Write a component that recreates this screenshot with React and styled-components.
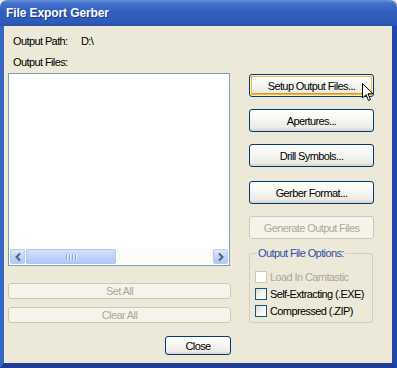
import React from "react";
import styled, { createGlobalStyle } from "styled-components";

const Global = createGlobalStyle`
  html, body {
    margin: 0;
    padding: 0;
    background: #ECE9D8;
  }
  * { box-sizing: border-box; }
`;

const Window = styled.div`
  position: relative;
  width: 397px;
  height: 368px;
  display: flex;
  flex-direction: column;
  font-family: "Liberation Sans", Arial, sans-serif;
  font-size: 11px;
  letter-spacing: -0.6px;
  color: #000;
`;

const TitleBar = styled.div`
  height: 26px;
  display: flex;
  align-items: center;
  padding-left: 6px;
  border-radius: 7px 7px 0 0;
  background: linear-gradient(180deg, #6A93DE 0%, #4572CB 12%, #325FBF 45%, #2F5BBA 80%, #2B53AD 100%);
  color: #fff;
  font-weight: bold;
  font-size: 12px;
  letter-spacing: -0.1px;
  text-shadow: 1px 1px 0 #1B3C8A;
`;

const Frame = styled.div`
  flex: 1;
  display: flex;
  flex-direction: column;
  background: #ECE9D8;
  border-left: 4px solid #3765C3;
  border-right: 5px solid #2347A5;
  border-bottom: 5px solid #1F3C97;
  padding: 8px 0 0 4px;
`;

const InfoRow = styled.div`
  display: flex;
  height: 14px;
  line-height: 14px;
  padding-left: 5px;
  margin-bottom: ${p => p.$gap || 0}px;
`;

const InfoLabel = styled.span`
  width: ${p => p.$width || "auto"};
`;

const Columns = styled.div`
  display: flex;
  align-items: flex-start;
`;

const LeftColumn = styled.div`
  width: 223px;
  display: flex;
  flex-direction: column;
`;

const RightColumn = styled.div`
  width: 125px;
  margin-left: 18px;
  padding-top: 1px;
  display: flex;
  flex-direction: column;
`;

const ListBox = styled.div`
  height: 193px;
  width: 222px;
  background: #fff;
  border: 1px solid #7F9DB9;
  display: flex;
  flex-direction: column;
  justify-content: flex-end;
  padding: 0 1px 1px 1px;
`;

const ScrollBar = styled.div`
  height: 15px;
  display: flex;
  background: #FBFBF8;
`;

const ScrollButton = styled.div`
  width: 15px;
  height: 15px;
  border-radius: 2px;
  border: 1px solid #B9CBF3;
  background: linear-gradient(180deg, #DCE6FC 0%, #C4D4F8 50%, #B4C7F3 100%);
  display: flex;
  align-items: center;
  justify-content: center;
`;

const Thumb = styled.div`
  width: 90px;
  margin-left: 1px;
  border-radius: 2px;
  border: 1px solid #AFC3EE;
  background: linear-gradient(180deg, #D6E2FC 0%, #C3D3F9 50%, #B5C8F4 100%);
  display: flex;
  align-items: center;
  justify-content: center;
  gap: 1px;
`;

const Grip = styled.span`
  width: 1px;
  height: 6px;
  background: #8CA6DC;
  border-right: 1px solid #EEF3FE;
  box-sizing: content-box;
`;

const Track = styled.div`
  flex: 1;
`;

const Button = styled.div`
  height: ${p => p.$height || 23}px;
  width: ${p => p.$width || "100%"};
  margin-top: ${p => p.$top || 0}px;
  align-self: ${p => p.$align || "stretch"};
  display: flex;
  align-items: center;
  justify-content: center;
  border-radius: 3px;
  border: 1px solid ${p => (p.$disabled ? "#CAC8BB" : "#003C74")};
  background: ${p =>
    p.$disabled
      ? "#F5F4EA"
      : "linear-gradient(180deg, #FFFFFF 0%, #F7F7F4 40%, #ECEBE6 85%, #D6D0C5 100%)"};
  color: ${p => (p.$disabled ? "#ACA899" : "#000")};
  box-shadow: ${p =>
    p.$hover ? "inset 0 0 0 1px #FFF0CF, inset 0 0 0 2px #F9B43A, inset 0 -2px 0 1px #E59700" : "none"};
`;

const GroupBox = styled.fieldset`
  margin: 7px 0 0 0;
  padding: 8px 5px 3px 5px;
  border: 1px solid #D0D0BF;
  border-radius: 3px;
  width: 124px;
`;

const Legend = styled.legend`
  padding: 0 1px;
  margin-left: 2px;
  color: #2C4DA8;
  line-height: 14px;
`;

const CheckRow = styled.div`
  height: 17px;
  display: flex;
  align-items: center;
  gap: 3px;
  color: ${p => (p.$disabled ? "#ACA899" : "#000")};
`;

const CheckBox = styled.span`
  width: 12px;
  height: 12px;
  border: 1px solid ${p => (p.$disabled ? "#CAC8BB" : "#1C5180")};
  background: ${p => (p.$disabled ? "#FFFFFF" : "linear-gradient(135deg, #DCDCD7 0%, #F4F4F0 50%, #FFFFFF 100%)")};
`;

const Cursor = styled.svg`
  position: absolute;
  left: 362px;
  top: 83px;
`;

function Arrow({ dir }) {
  const d = dir === "left" ? "M6 1.5 L2.5 5 L6 8.5" : "M2 1.5 L5.5 5 L2 8.5";
  return (
    <svg width="8" height="10" viewBox="0 0 8 10">
      <path d={d} fill="none" stroke="#4D6185" strokeWidth="2" />
    </svg>
  );
}

export default function App() {
  return (
    <>
      <Global />
      <Window>
        <TitleBar>File Export Gerber</TitleBar>
        <Frame>
          <InfoRow $gap={7}>
            <InfoLabel $width="68px">Output Path:</InfoLabel>
            <span>D:\</span>
          </InfoRow>
          <InfoRow $gap={4}>
            <InfoLabel>Output Files:</InfoLabel>
          </InfoRow>
          <Columns>
            <LeftColumn>
              <ListBox>
                <ScrollBar>
                  <ScrollButton><Arrow dir="left" /></ScrollButton>
                  <Thumb><Grip /><Grip /><Grip /><Grip /></Thumb>
                  <Track />
                  <ScrollButton><Arrow dir="right" /></ScrollButton>
                </ScrollBar>
              </ListBox>
              <Button $disabled $height={16} $top={17}>Set All</Button>
              <Button $disabled $height={16} $top={8}>Clear All</Button>
              <Button $height={19} $top={13} $width="66px" $align="flex-end">Close</Button>
            </LeftColumn>
            <RightColumn>
              <Button $hover>Setup Output Files...</Button>
              <Button $top={12}>Apertures...</Button>
              <Button $top={12}>Drill Symbols...</Button>
              <Button $top={14}>Gerber Format...</Button>
              <Button $disabled $top={12}>Generate Output Files</Button>
              <GroupBox>
                <Legend>Output File Options:</Legend>
                <CheckRow $disabled><CheckBox $disabled />Load In Camtastic</CheckRow>
                <CheckRow><CheckBox />Self-Extracting (.EXE)</CheckRow>
                <CheckRow><CheckBox />Compressed (.ZIP)</CheckRow>
              </GroupBox>
            </RightColumn>
          </Columns>
        </Frame>
        <Cursor width="12" height="19" viewBox="0 0 12 19">
          <path d="M0.5 0.5 L0.5 15 L4 11.5 L6.5 17.5 L8.5 16.6 L6 10.8 L11 10.8 Z" fill="#fff" stroke="#000" strokeWidth="1" strokeLinejoin="miter" />
        </Cursor>
      </Window>
    </>
  );
}
